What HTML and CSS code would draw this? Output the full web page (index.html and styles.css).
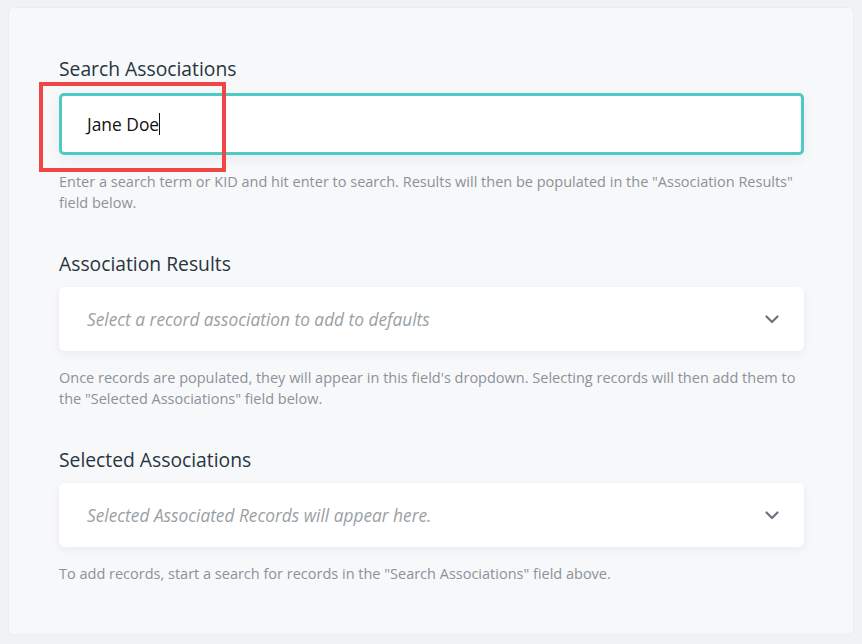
FILE: index.html
```html
<!DOCTYPE html>
<html lang="en">
<head>
<meta charset="utf-8">
<title>Associations</title>
<link rel="stylesheet" href="styles.css">
</head>
<body>
<div class="card">
  <section class="field first">
    <label class="label" for="search">Search Associations</label>
    <div class="input-wrap">
      <div class="input" id="search"><span class="value">Jane Doe</span><span class="caret"></span></div>
      <div class="highlight"></div>
    </div>
    <p class="help">Enter a search term or KID and hit enter to search. Results will then be populated in the "Association Results" field below.</p>
  </section>

  <section class="field">
    <div class="label">Association Results</div>
    <div class="select">
      <span class="placeholder">Select a record association to add to defaults</span>
      <svg class="chevron" width="14" height="9" viewBox="0 0 14 9"><path d="M1.5 1.5 L7 7 L12.5 1.5" fill="none" stroke="#6b747e" stroke-width="2.2" stroke-linecap="round" stroke-linejoin="round"/></svg>
    </div>
    <p class="help">Once records are populated, they will appear in this field's dropdown. Selecting records will then add them to the "Selected Associations" field below.</p>
  </section>

  <section class="field">
    <div class="label">Selected Associations</div>
    <div class="select">
      <span class="placeholder">Selected Associated Records will appear here.</span>
      <svg class="chevron" width="14" height="9" viewBox="0 0 14 9"><path d="M1.5 1.5 L7 7 L12.5 1.5" fill="none" stroke="#6b747e" stroke-width="2.2" stroke-linecap="round" stroke-linejoin="round"/></svg>
    </div>
    <p class="help">To add records, start a search for records in the "Search Associations" field above.</p>
  </section>
</div>
</body>
</html>
```

FILE: styles.css
```css
html, body {
  background: #f1f2f4;
}
body {
  margin: 7px 8px 0 8px;
  font-family: "Open Sans", "Noto Sans", sans-serif;
}
.card {
  background: #f7f8fa;
  border: 1px solid #ebedf0;
  border-radius: 6px;
  padding: 49px 49px 50px 50px;
  display: flex;
  flex-direction: column;
}
.field {
  display: flex;
  flex-direction: column;
  margin-top: 39px;
}
.field.first {
  margin-top: 0;
}
.label {
  display: block;
  font-size: 19.3px;
  line-height: 24px;
  color: #27353f;
  margin-bottom: 11px;
}
.first .label {
  margin-bottom: 12px;
}
.input-wrap {
  position: relative;
}
.input {
  height: 56px;
  background: #fff;
  border: 3px solid #4ecac5;
  border-radius: 5px;
  box-shadow: 0 4px 12px rgba(30, 40, 60, 0.06);
  padding: 0 25px;
  display: flex;
  align-items: center;
  font-size: 17.4px;
  color: #111;
}
.caret {
  display: inline-block;
  width: 1px;
  height: 22px;
  background: #111;
}
.highlight {
  position: absolute;
  left: -20px;
  top: -11px;
  width: 179px;
  height: 82px;
  border: 4px solid #f04646;
}
.help {
  margin: 16px 0 0 0;
  font-size: 14.5px;
  line-height: 21px;
  color: #8b9299;
}
.select {
  height: 64px;
  background: #fff;
  border-radius: 6px;
  box-shadow: 0 3px 10px rgba(30, 40, 60, 0.06);
  padding: 0 25px 0 28px;
  display: flex;
  align-items: center;
  justify-content: space-between;
}
.placeholder {
  font-size: 17.3px;
  font-style: italic;
  color: #9a9fa5;
}
.chevron {
  display: block;
}
```
